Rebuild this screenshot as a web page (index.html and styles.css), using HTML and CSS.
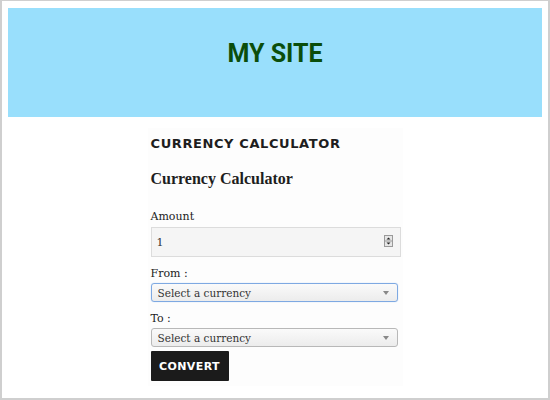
FILE: index.html
```html
<!DOCTYPE html>
<html>
<head>
<meta charset="utf-8">
<link rel="stylesheet" href="styles.css">
</head>
<body>
<div class="frame">
  <header class="site-header">
    <h1 class="site-title">MY SITE</h1>
  </header>
  <main class="content">
    <section class="widget">
      <h2 class="widget-title">CURRENCY CALCULATOR</h2>
      <h3 class="calc-title">Currency Calculator</h3>
      <form class="calc-form">
        <label class="field-label label-amount">Amount</label>
        <div class="number-input">
          <span class="number-value">1</span>
          <span class="spinner">
            <svg width="9" height="12" viewBox="0 0 9 12">
              <rect x="0.5" y="0.5" width="8" height="11" fill="#e6e6e6" stroke="#9a9a9a"/>
              <line x1="0.5" y1="6" x2="8.5" y2="6" stroke="#9a9a9a"/>
              <path d="M2.5 4.5 L4.5 2.5 L6.5 4.5 Z" fill="#222"/>
              <path d="M2.5 7.5 L4.5 9.5 L6.5 7.5 Z" fill="#222"/>
            </svg>
          </span>
        </div>
        <label class="field-label label-from">From :</label>
        <div class="select select-focus">
          <span>Select a currency</span>
          <span class="caret"></span>
        </div>
        <label class="field-label label-to">To :</label>
        <div class="select">
          <span>Select a currency</span>
          <span class="caret"></span>
        </div>
        <button type="button" class="convert">CONVERT</button>
      </form>
    </section>
  </main>
</div>
</body>
</html>
```
FILE: styles.css
```css
html, body {
  margin: 0;
  padding: 0;
  background: #fff;
}
.frame {
  width: 550px;
  height: 400px;
  box-sizing: border-box;
  border: 1px solid #cfcfcf;
  border-left-width: 2px;
  border-right-width: 2px;
  border-bottom-width: 2px;
  padding: 7px 6px 0 6px;
  overflow: hidden;
}
.site-header {
  background: #99dffc;
  height: 109px;
  display: flex;
  justify-content: center;
  padding-top: 33px;
  box-sizing: border-box;
}
.site-title {
  margin: 0;
  font-family: Roboto, "Liberation Sans", sans-serif;
  font-weight: 700;
  font-size: 25px;
  line-height: 26px;
  color: #0b4e0b;
}
.content {
  display: flex;
  justify-content: center;
  padding-top: 11px;
}
.widget {
  width: 255px;
  background: #fdfdfd;
  padding: 8px 3px 0 3px;
  height: 258px;
  box-sizing: border-box;
}
.widget-title {
  margin: 0;
  font-family: "DejaVu Sans", sans-serif;
  font-weight: 700;
  font-size: 13px;
  line-height: 16px;
  letter-spacing: 0.6px;
  color: #1e1e1e;
}
.calc-title {
  margin: 18px 0 0 0;
  font-family: "Liberation Serif", serif;
  font-weight: 700;
  font-size: 16px;
  line-height: 18px;
  color: #1e1e1e;
}
.calc-form {
  display: flex;
  flex-direction: column;
  align-items: flex-start;
  margin-top: 21px;
}
.field-label {
  font-family: "DejaVu Serif", serif;
  font-size: 11px;
  line-height: 16px;
  color: #222;
}
.number-input {
  margin-top: 2px;
  width: 250px;
  height: 30px;
  box-sizing: border-box;
  background: #f5f5f5;
  border: 1px solid #dcdcdc;
  display: flex;
  align-items: center;
  justify-content: space-between;
  padding: 0 7px 0 5px;
  font-family: "DejaVu Serif", serif;
  font-size: 11px;
  color: #333;
}
.label-from {
  margin-top: 9px;
}
.label-to {
  margin-top: 9px;
}
.select {
  margin-top: 1px;
  width: 247px;
  height: 19px;
  box-sizing: border-box;
  border: 1px solid #b8b8b8;
  border-radius: 3px;
  background: linear-gradient(#fafafa, #ececec);
  display: flex;
  align-items: center;
  justify-content: space-between;
  padding: 0 8px 0 6px;
  font-family: "DejaVu Serif", serif;
  font-size: 10.5px;
  color: #333;
}
.select-focus {
  border-color: #7ea9e2;
  box-shadow: 0 0 1px #9cc0f0;
}
.caret {
  width: 0;
  height: 0;
  border-left: 3px solid transparent;
  border-right: 3px solid transparent;
  border-top: 4px solid #888;
}
.convert {
  margin-top: 4px;
  width: 78px;
  height: 30px;
  background: #1b1b1b;
  color: #fff;
  border: none;
  border-radius: 1px;
  font-family: "DejaVu Sans", sans-serif;
  font-weight: 700;
  font-size: 11px;
  letter-spacing: 0.4px;
  padding: 0;
}
```
